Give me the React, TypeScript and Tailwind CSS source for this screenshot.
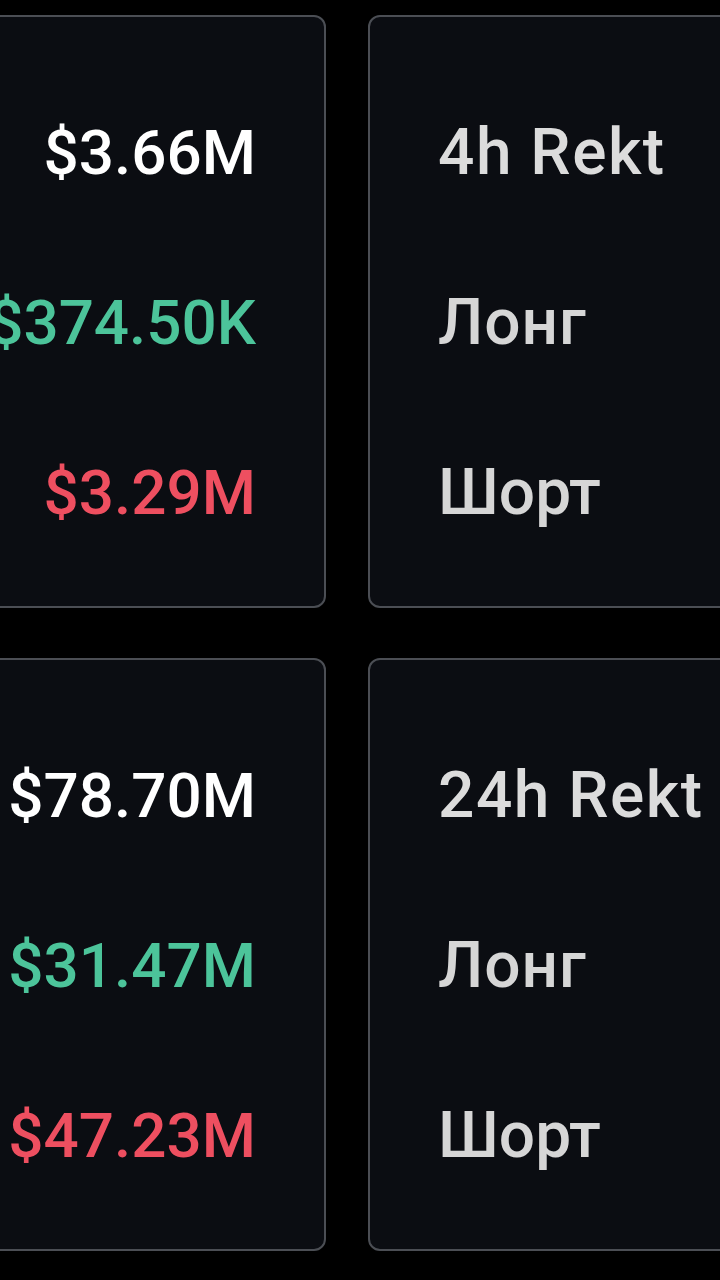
import React from "react";

type Row = { text: string; color: string };

const Card = ({ rows, align }: { rows: Row[]; align: "left" | "right" }) => (
  <div className="w-[400px] h-[593px] rounded-[12px] border-2 border-[#4b4e54] bg-[#0b0d12] pt-[51px] pb-[28px] flex flex-col">
    {rows.map((r, i) => (
      <div
        key={i}
        className={`h-[170px] flex items-center ${align === "right" ? "justify-end pr-[68px] text-[62px]" : "justify-start pl-[68px] text-[64px]"}`}
      >
        <span className={`leading-none whitespace-nowrap ${r.color}`}>{r.text}</span>
      </div>
    ))}
  </div>
);

export default function App() {
  return (
    <div
      className="w-[720px] h-[1280px] bg-black overflow-hidden pt-[15px]"
      style={{ fontFamily: "Roboto, 'Liberation Sans', sans-serif" }}
    >
      <div className="grid grid-cols-[400px_400px] gap-x-[42px] gap-y-[50px] ml-[-74px] font-medium">
        <Card
          align="right"
          rows={[
            { text: "$3.66M", color: "text-white" },
            { text: "$374.50K", color: "text-[#4cc49a]" },
            { text: "$3.29M", color: "text-[#ee4f60]" },
          ]}
        />
        <Card
          align="left"
          rows={[
            { text: "4h Rekt", color: "text-[#dcdcdc] tracking-[1.5px]" },
            { text: "Лонг", color: "text-[#d6d6d6] tracking-[1px]" },
            { text: "Шорт", color: "text-[#d6d6d6]" },
          ]}
        />
        <Card
          align="right"
          rows={[
            { text: "$78.70M", color: "text-white" },
            { text: "$31.47M", color: "text-[#4cc49a]" },
            { text: "$47.23M", color: "text-[#ee4f60]" },
          ]}
        />
        <Card
          align="left"
          rows={[
            { text: "24h Rekt", color: "text-[#dcdcdc] tracking-[1.5px]" },
            { text: "Лонг", color: "text-[#d6d6d6] tracking-[1px]" },
            { text: "Шорт", color: "text-[#d6d6d6]" },
          ]}
        />
      </div>
    </div>
  );
}
